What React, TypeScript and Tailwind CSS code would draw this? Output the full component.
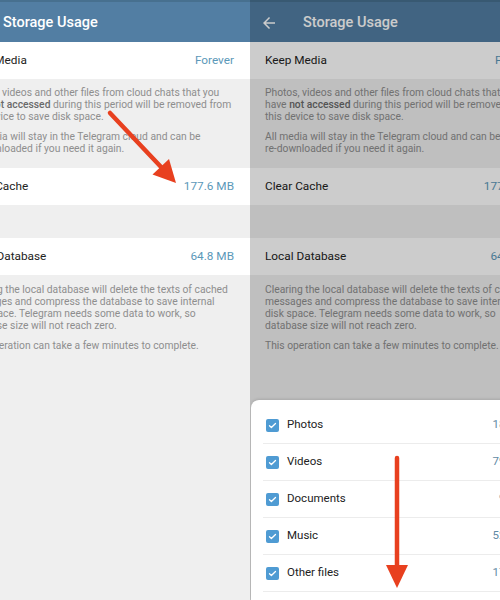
import React from 'react';

const FONT = { fontFamily: 'Roboto, "Noto Sans", sans-serif' };

interface RowProps {
  label: string;
  value: string;
}

const Row: React.FC<RowProps> = ({ label, value }) => (
  <div className="h-[37px] bg-white flex items-center justify-between pl-[15px] pr-[16px]">
    <span className="text-[11.8px] text-[#222222]">{label}</span>
    <span className="text-[11.8px] text-[#5b98b9]">{value}</span>
  </div>
);

const BackArrow = () => (
  <svg width="18" height="18" viewBox="0 0 24 24" fill="white">
    <path d="M20 11H7.83l5.59-5.59L12 4l-8 8 8 8 1.41-1.41L7.83 13H20v-2z" />
  </svg>
);

const Check = () => (
  <span className="w-[13px] h-[13px] rounded-[2px] bg-[#4f9bd3] flex items-center justify-center shrink-0">
    <svg width="9" height="9" viewBox="0 0 24 24" fill="none" stroke="white" strokeWidth="3.5" strokeLinecap="round" strokeLinejoin="round">
      <path d="M4 12.5l5 5L20 6.5" />
    </svg>
  </span>
);

const sheetItems = [
  { label: 'Photos', size: '18.4 MB' },
  { label: 'Videos', size: '79.6 MB' },
  { label: 'Documents', size: '9.2 MB' },
  { label: 'Music', size: '52.7 MB' },
  { label: 'Other files', size: '17.7 MB' },
];

const Phone: React.FC<{ dimmed?: boolean; className?: string }> = ({ dimmed, className }) => (
  <div className={`relative w-[300px] h-[600px] shrink-0 bg-[#efefef] ${className ?? ''}`}>
    <header className="h-[42px] bg-[#527ea3] border-t-2 border-[#47708f] flex items-center pl-[10px] pt-[1px]">
      <BackArrow />
      <span className="ml-[25px] text-[14.5px] font-medium text-white">Storage Usage</span>
    </header>

    <Row label="Keep Media" value="Forever" />
    <div className="px-[15px] pt-[8px] pb-[13px] text-[10.3px] leading-[12px] text-[#8e8e8e] whitespace-nowrap">
      <div>Photos, videos and other files from cloud chats that you</div>
      <div>
        have <span className="font-medium text-[#6a6a6a]">not accessed</span> during this period will be removed from
      </div>
      <div>this device to save disk space.</div>
      <div className="mt-[8px]">All media will stay in the Telegram cloud and can be</div>
      <div>re-downloaded if you need it again.</div>
    </div>

    <Row label="Clear Cache" value="177.6 MB" />
    <div className="h-[33px]" />
    <Row label="Local Database" value="64.8 MB" />
    <div className="px-[15px] pt-[9px] pb-[13px] text-[10.3px] leading-[12px] text-[#8e8e8e] whitespace-nowrap">
      <div>Clearing the local database will delete the texts of cached</div>
      <div>messages and compress the database to save internal</div>
      <div>disk space. Telegram needs some data to work, so</div>
      <div>database size will not reach zero.</div>
      <div className="mt-[8px]">This operation can take a few minutes to complete.</div>
    </div>

    {dimmed && (
      <>
        <div className="absolute inset-0 bg-black/20" />
        <div className="absolute left-[1px] right-0 top-[400px] bottom-0 bg-white rounded-t-[8px] pt-[7px] shadow-[0_-1px_3px_rgba(0,0,0,0.12)]">
          {sheetItems.map((item) => (
            <div key={item.label}>
              <div className="h-[36px] flex items-center pl-[15px] pr-[15px]">
                <Check />
                <span className="ml-[8px] text-[11.5px] text-[#222222]">{item.label}</span>
                <span className="ml-auto text-[11.5px] text-[#5f8aa5]">{item.size}</span>
              </div>
              <div className="ml-[12px] h-px bg-[#ececec]" />
            </div>
          ))}
        </div>
      </>
    )}
  </div>
);

export default function App() {
  return (
    <div className="relative w-[500px] h-[600px] overflow-hidden flex bg-[#efefef]" style={FONT}>
      <div className="w-[250px] h-[600px] overflow-hidden flex">
        <Phone className="ml-[-50px]" />
      </div>
      <div className="w-[250px] h-[600px] overflow-hidden flex">
        <Phone dimmed />
      </div>

      <svg className="absolute inset-0 pointer-events-none" width="500" height="600" viewBox="0 0 500 600">
        <line x1="110" y1="113" x2="162" y2="168" stroke="#e8401f" strokeWidth="4.5" strokeLinecap="round" />
        <polygon points="176,183 152.5,174.5 169,159" fill="#e8401f" />
        <line x1="397" y1="458" x2="397" y2="568" stroke="#e8401f" strokeWidth="4.5" strokeLinecap="round" />
        <polygon points="386,565 408,565 397,588" fill="#e8401f" />
      </svg>
    </div>
  );
}
